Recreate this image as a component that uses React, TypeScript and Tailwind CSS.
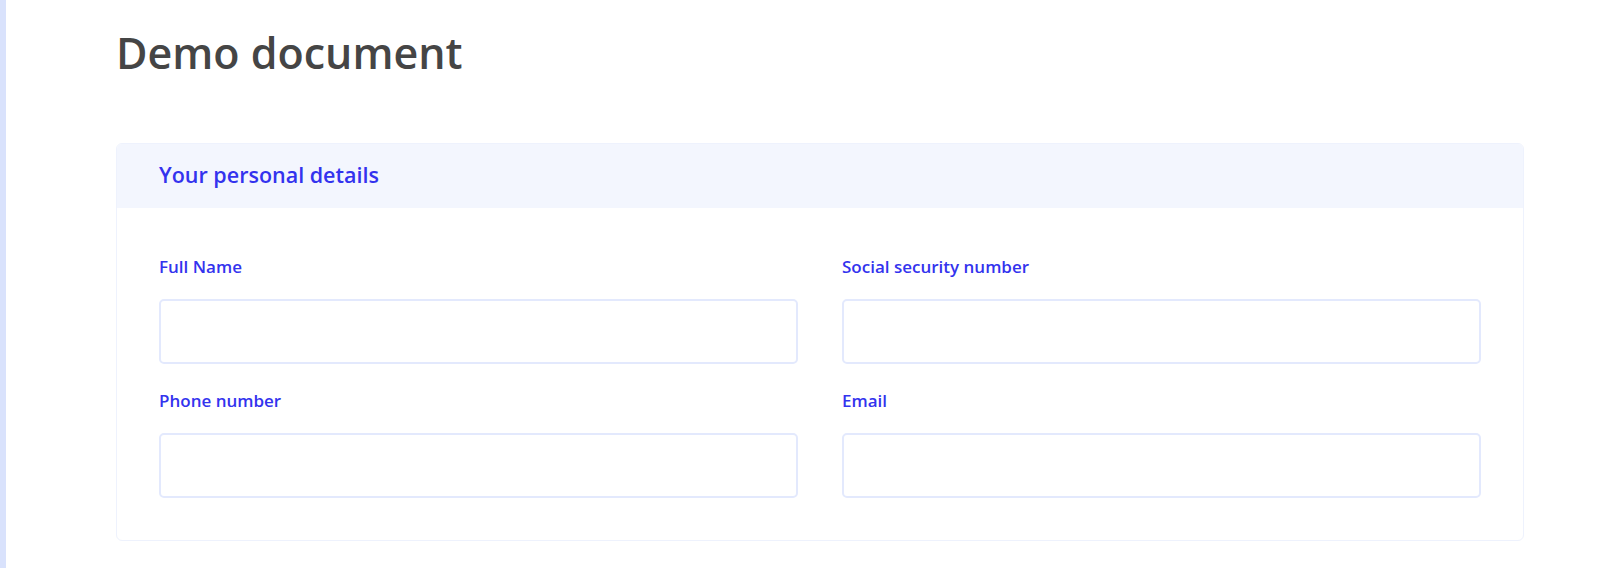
import React from "react";

function Field({ label }: { label: string }) {
  return (
    <div className="flex flex-col">
      <label className="text-[17px] leading-[24px] font-semibold text-[#3333ee] mb-[20px]">{label}</label>
      <div className="h-[65px] rounded-[5px] border-2 border-[#e3e9fd] bg-white" />
    </div>
  );
}

export default function App() {
  return (
    <div className="flex min-h-[568px] bg-white" style={{ fontFamily: "'Open Sans', 'Noto Sans', sans-serif" }}>
      <div className="w-[6px] shrink-0 bg-[#d9e2fc]" />
      <div className="pl-[110px] pt-[27px] w-[1518px]">
        <h1 className="text-[43px] leading-[52px] font-semibold text-[#454545]">Demo document</h1>
        <div className="mt-[64px] rounded-[6px] border border-[#eef2fd] overflow-hidden">
          <div className="h-[64px] bg-[#f3f6fe] px-[42px] pb-[1px] flex items-center">
            <h2 className="text-[21.5px] font-semibold text-[#3333ee]">Your personal details</h2>
          </div>
          <div className="px-[42px] pt-[47px] pb-[42px] grid grid-cols-2 gap-x-[44px] gap-y-[25px]">
            <Field label="Full Name" />
            <Field label="Social security number" />
            <Field label="Phone number" />
            <Field label="Email" />
          </div>
        </div>
      </div>
    </div>
  );
}
